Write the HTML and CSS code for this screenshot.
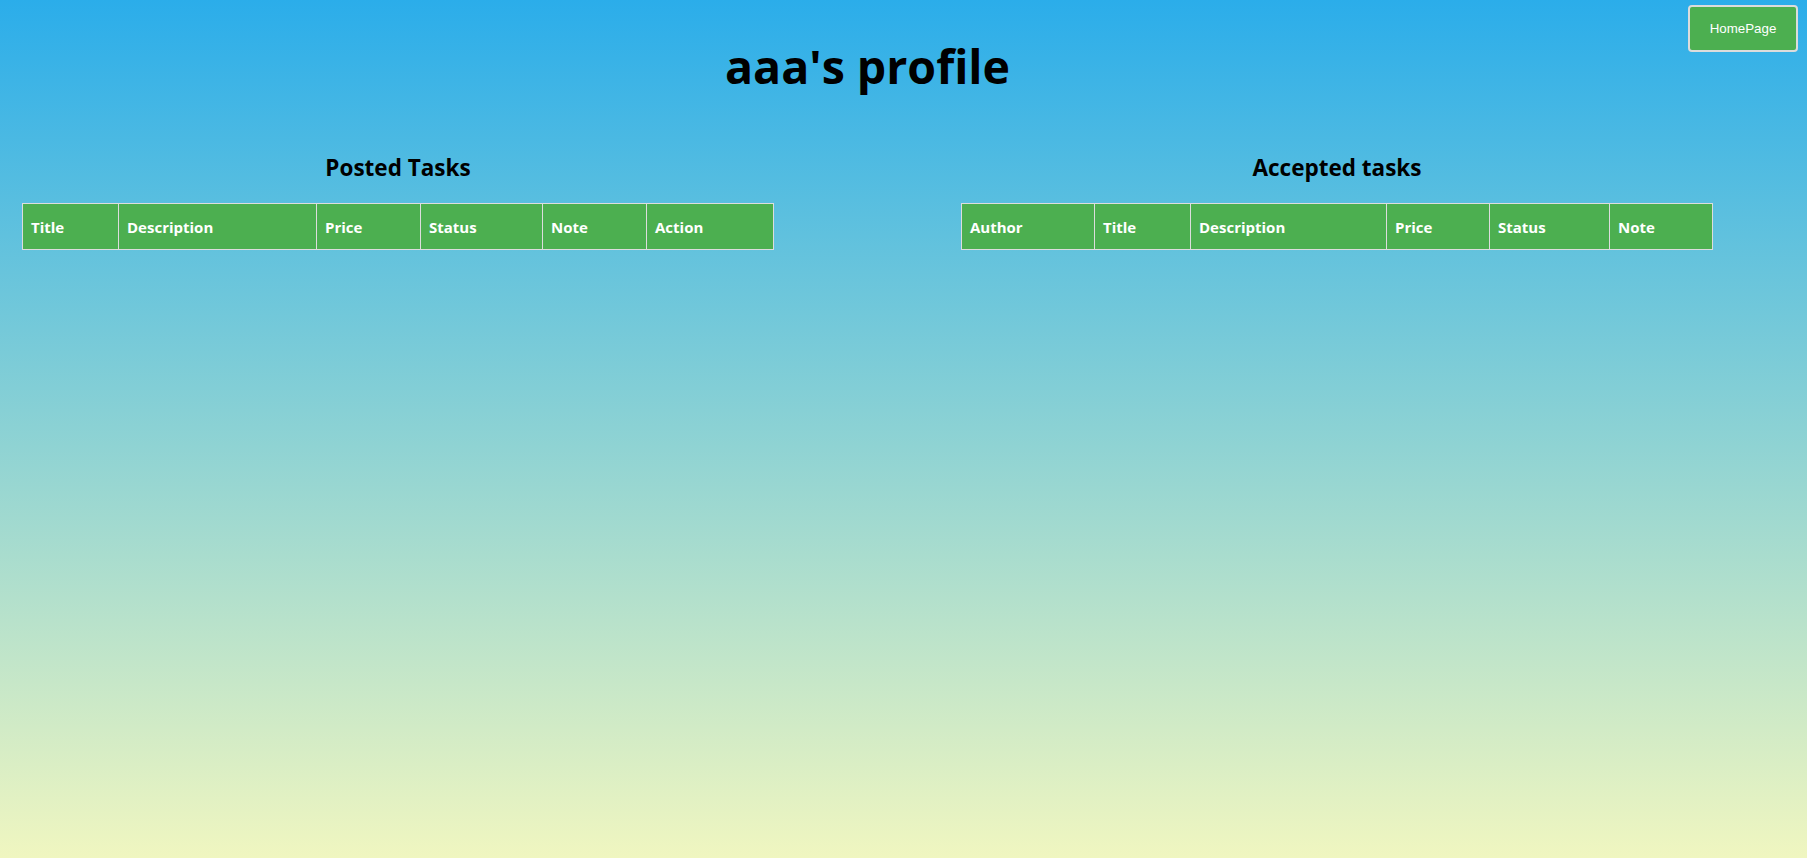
FILE: index.html
```html
<!DOCTYPE html>
<html lang="en">
<head>
<meta charset="utf-8">
<title>aaa's profile</title>
<link rel="stylesheet" href="styles.css">
</head>
<body>
<header class="top">
  <h1 class="page-title">aaa's profile</h1>
  <button class="home-btn" type="button">HomePage</button>
</header>
<main class="columns">
  <section class="panel">
    <h2 class="panel-title">Posted Tasks</h2>
    <table class="tasks">
      <colgroup>
        <col class="w96"><col class="w198"><col class="w104"><col class="w122"><col class="w104"><col class="w127">
      </colgroup>
      <thead>
        <tr><th>Title</th><th>Description</th><th>Price</th><th>Status</th><th>Note</th><th>Action</th></tr>
      </thead>
    </table>
  </section>
  <section class="panel">
    <h2 class="panel-title">Accepted tasks</h2>
    <table class="tasks">
      <colgroup>
        <col class="w133"><col class="w96"><col class="w196"><col class="w103"><col class="w120"><col class="w103">
      </colgroup>
      <thead>
        <tr><th>Author</th><th>Title</th><th>Description</th><th>Price</th><th>Status</th><th>Note</th></tr>
      </thead>
    </table>
  </section>
</main>
</body>
</html>
```

FILE: styles.css
```css
html {
  min-height: 100%;
  background: linear-gradient(180deg, #2badea 0%, #8fd3d3 52%, #f0f6c0 100%);
}
body {
  margin: 0;
  font-family: "Open Sans", "Noto Sans", sans-serif;
  color: #000;
}
.top {
  display: flex;
  align-items: flex-start;
}
.page-title {
  flex: 1;
  margin: 39px 0 0;
  padding-left: 47px;
  text-align: center;
  font-size: 46.5px;
  line-height: 54px;
  font-weight: 700;
}
.home-btn {
  margin: 5px 9px 0 0;
  width: 110px;
  height: 47px;
  background: #4caf50;
  color: #fff;
  border: 2px solid #dcdcdc;
  border-radius: 4px;
  font-family: "Liberation Sans", Arial, sans-serif;
  font-size: 13.33px;
  padding: 0;
}
.columns {
  display: flex;
  gap: 187px;
  padding-left: 22px;
  margin-top: 61px;
}
.panel {
  width: 752px;
}
.panel-title {
  margin: 0 0 22px;
  text-align: center;
  font-size: 22.5px;
  line-height: 27px;
  font-weight: 700;
}
.tasks {
  width: 752px;
  table-layout: fixed;
  border-collapse: collapse;
}
.tasks th {
  background: #4caf50;
  color: #fff;
  border: 1px solid #dddddd;
  padding: 13px 8px 11px;
  text-align: left;
  font-size: 15px;
  line-height: 21px;
  font-weight: 700;
  white-space: nowrap;
}
.w96 { width: 96px; }
.w198 { width: 198px; }
.w104 { width: 104px; }
.w122 { width: 122px; }
.w127 { width: 127px; }
.w133 { width: 133px; }
.w196 { width: 196px; }
.w103 { width: 103px; }
.w120 { width: 120px; }
```
